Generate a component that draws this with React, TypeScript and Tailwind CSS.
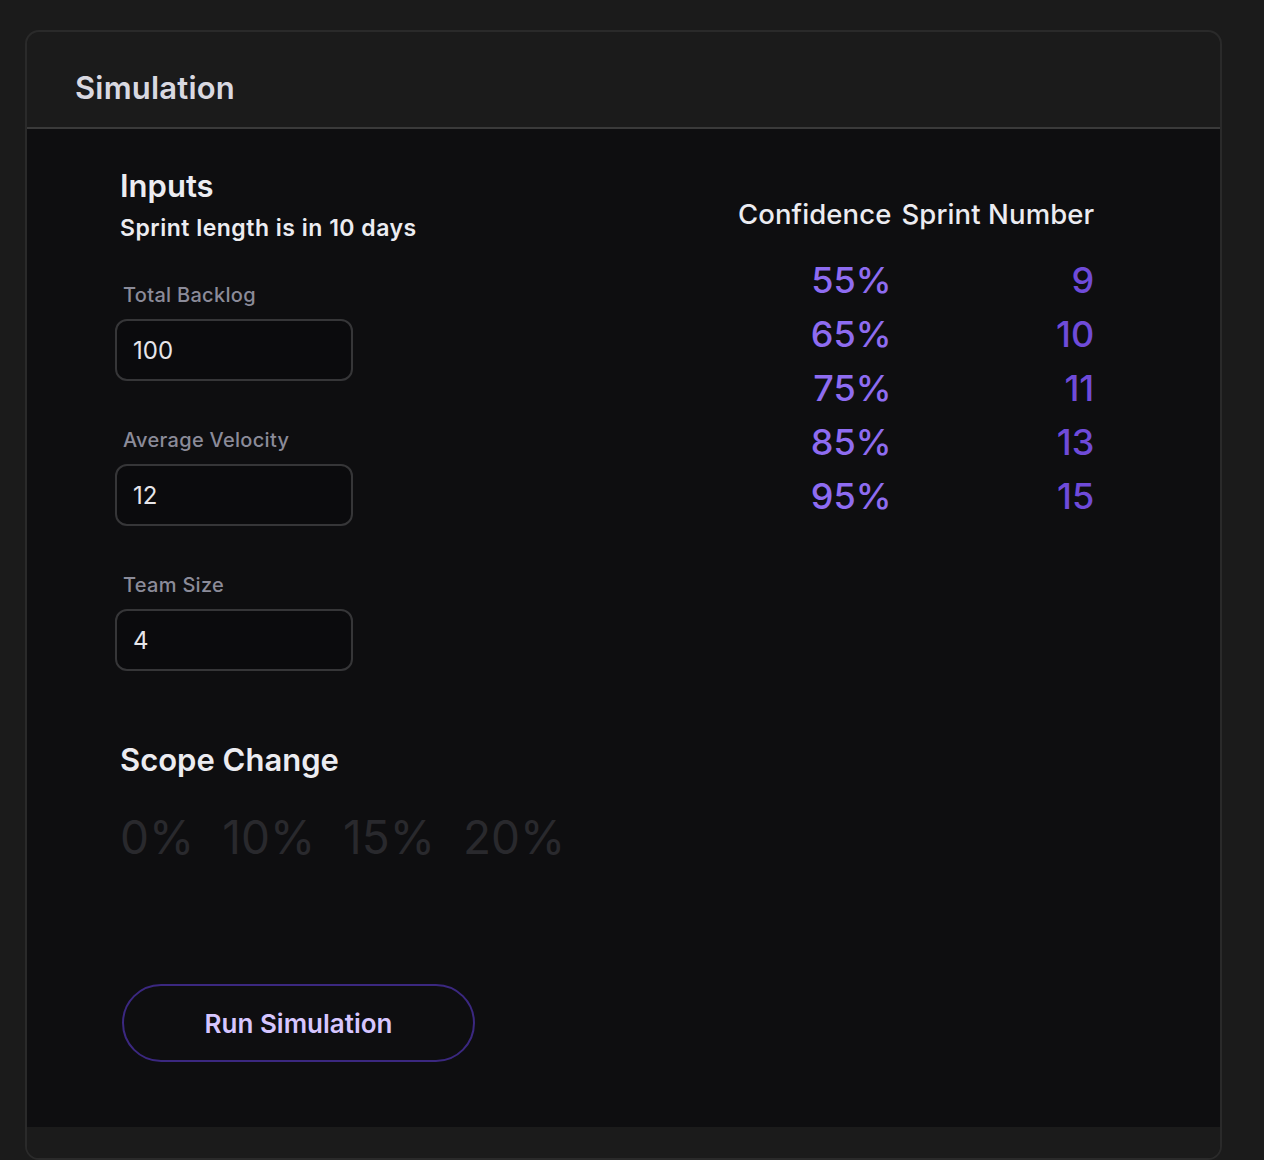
const inputs = [
  { label: 'Total Backlog', value: '100' },
  { label: 'Average Velocity', value: '12' },
  { label: 'Team Size', value: '4' },
]

const results = [
  { confidence: '55%', sprint: '9' },
  { confidence: '65%', sprint: '10' },
  { confidence: '75%', sprint: '11' },
  { confidence: '85%', sprint: '13' },
  { confidence: '95%', sprint: '15' },
]

const scopes = ['0%', '10%', '15%', '20%']

function InputField({ label, value }: { label: string; value: string }) {
  return (
    <div className="-ml-[5px] flex flex-col">
      <label className="pl-[8px] text-[20px] leading-6 font-medium tracking-[0.3px] text-[#8b8b99]">{label}</label>
      <input
        defaultValue={value}
        className="mt-[12px] h-[62px] w-[238px] rounded-xl border-2 border-[#363638] bg-[#0b0b0d] pl-4 text-[24px] text-[#e6e6ea] outline-none"
      />
    </div>
  )
}

export default function App() {
  return (
    <div
      className="min-h-[1160px] bg-[#1b1b1b] px-[25px] pt-[30px]"
      style={{ fontFamily: 'Inter, "Noto Sans", sans-serif' }}
    >
      <div className="w-[1197px] overflow-hidden rounded-[14px] border-2 border-[#2a2a2a] bg-[#1b1b1b]">
        <div className="h-[97px] border-b-2 border-[#3a3a3a] px-[48px] pt-[37px]">
          <h2 className="text-[31px] leading-[37px] font-semibold tracking-[0.2px] text-[#d9d9e1]">Simulation</h2>
        </div>

        <div className="flex bg-[#0e0e10] pl-[93px] pt-[39px] pb-[65px]">
          <div className="flex w-[618px] flex-col">
            <h3 className="text-[31px] leading-9 font-semibold text-[#ececf1]">Inputs</h3>
            <p className="mt-[10px] text-[23px] leading-7 font-semibold tracking-[0.5px] text-[#ececf1]">
              Sprint length is in 10 days
            </p>

            <div className="mt-[41px] flex flex-col gap-[47px]">
              {inputs.map((f) => (
                <InputField key={f.label} label={f.label} value={f.value} />
              ))}
            </div>

            <h3 className="mt-[71px] text-[31px] leading-9 font-semibold text-[#ececf1]">Scope Change</h3>
            <div className="mt-[36px] flex gap-[28px] text-[46px] leading-none text-[#29292d]">
              {scopes.map((s) => (
                <span key={s}>{s}</span>
              ))}
            </div>

            <button className="mt-[124px] ml-[2px] h-[78px] w-[353px] rounded-full border-2 border-[#3b2880] text-[26px] font-semibold text-[#d6c6ff]">
              Run Simulation
            </button>
          </div>

          <div className="mt-[30px]">
            <div className="grid grid-cols-[auto_auto] gap-x-[10px]">
              <div className="text-[27.5px] leading-8 font-medium tracking-[0.1px] text-[#ececf1]">Confidence</div>
              <div className="text-[27.5px] leading-8 font-medium tracking-[0.1px] text-[#ececf1]">Sprint Number</div>
              <div className="col-span-2 h-[23px]" />
              {results.map((r) => (
                <div key={r.confidence} className="contents">
                  <div className="text-right text-[36px] leading-[54px] font-medium text-[#8e6cf1]">
                    {r.confidence}
                  </div>
                  <div className="text-right text-[36px] leading-[54px] font-medium text-[#6f4bd9]">
                    {r.sprint}
                  </div>
                </div>
              ))}
            </div>
          </div>
        </div>

        <div className="h-[31px] bg-[#1b1b1b]" />
      </div>
    </div>
  )
}
